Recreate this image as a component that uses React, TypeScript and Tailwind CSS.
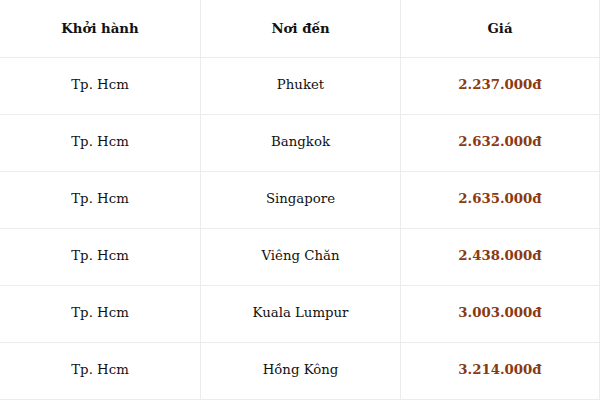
import React from "react";

const rows = [
  { from: "Tp. Hcm", to: "Phuket", price: "2.237.000đ" },
  { from: "Tp. Hcm", to: "Bangkok", price: "2.632.000đ" },
  { from: "Tp. Hcm", to: "Singapore", price: "2.635.000đ" },
  { from: "Tp. Hcm", to: "Viêng Chăn", price: "2.438.000đ" },
  { from: "Tp. Hcm", to: "Kuala Lumpur", price: "3.003.000đ" },
  { from: "Tp. Hcm", to: "Hồng Kông", price: "3.214.000đ" },
];

const App = () => {
  return (
    <div className="w-[600px] h-[400px] overflow-hidden bg-white font-['DejaVu_Serif',serif] text-[13.3px] text-[#111]">
      <div className="grid grid-cols-[200px_200px_199px] border-r border-[#ececec]">
        <div className="h-[58px] flex items-center justify-center font-bold border-b border-[#ececec]">Khởi hành</div>
        <div className="h-[58px] flex items-center justify-center font-bold border-b border-l border-[#ececec]">Nơi đến</div>
        <div className="h-[58px] flex items-center justify-center font-bold border-b border-l border-[#ececec]">Giá</div>
        {rows.map((r, i) => (
          <React.Fragment key={i}>
            <div className="h-[57px] pb-[2px] flex items-center justify-center border-b border-[#ececec]">{r.from}</div>
            <div className="h-[57px] pb-[2px] flex items-center justify-center border-b border-l border-[#ececec]">{r.to}</div>
            <div className="h-[57px] pb-[2px] flex items-center justify-center border-b border-l border-[#ececec] font-bold text-[#8a3a12]">{r.price}</div>
          </React.Fragment>
        ))}
      </div>
    </div>
  );
};

export default App;
